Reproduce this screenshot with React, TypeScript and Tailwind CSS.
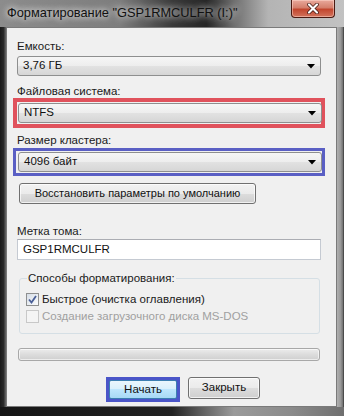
import React from "react";

const font = "font-['Liberation_Sans',Arial,sans-serif]";

function Arrow() {
  return (
    <svg width="8" height="5" viewBox="0 0 8 5" className="shrink-0">
      <path d="M0 0H8L4 4.5Z" fill="#000" />
    </svg>
  );
}

function Combo({ value }: { value: string }) {
  return (
    <div className="flex h-[20px] w-[304px] items-center justify-between rounded-[3px] border border-[#8e8f8f] bg-[linear-gradient(to_bottom,#f6f6f6_0%,#ededed_50%,#e2e2e2_50%,#d6d6d6_100%)] pl-[5px] pr-[5px] text-[11.5px] leading-none text-[#111]">
      <span>{value}</span>
      <Arrow />
    </div>
  );
}

function Label({ children, className = "" }: { children: React.ReactNode; className?: string }) {
  return <div className={`h-[14px] text-[11.5px] leading-[14px] text-[#1a1a1a] ${className}`}>{children}</div>;
}

function Checkbox({ checked, disabled }: { checked?: boolean; disabled?: boolean }) {
  return (
    <div
      className={`flex h-[13px] w-[13px] shrink-0 items-center justify-center border ${
        disabled ? "border-[#c8c8c8] bg-[#f4f4f4]" : "border-[#8e8f8f] bg-[linear-gradient(135deg,#d6dde6,#fbfcfd)]"
      }`}
    >
      {checked && (
        <svg width="9" height="9" viewBox="0 0 9 9">
          <path d="M1 4.5L3.5 7.5L8 1" fill="none" stroke="#4a5f97" strokeWidth="1.8" />
        </svg>
      )}
    </div>
  );
}

export default function App() {
  return (
    <div
      className={`flex h-[416px] w-[344px] flex-col overflow-hidden bg-[linear-gradient(to_right,#161616_0%,#1e1e1e_45%,#3a3a3a_55%,#8f8f8f_68%,#9a9a9a_85%,#8a8a8a_100%)] ${font}`}
    >
      {/* title bar */}
      <div className="flex h-[27px] shrink-0 items-start justify-between bg-[linear-gradient(to_right,#8c8c8c_0%,#7d7d7d_35%,#3a3a3a_50%,#262626_60%,#6f6f6f_68%,#b4b4b4_78%,#c2c2c2_100%)] pl-[7px] pr-[9px]">
        <div className="pt-[5px] text-[12.8px] leading-[16px] text-[#111] [text-shadow:0_0_6px_rgba(255,255,255,0.9),0_0_10px_rgba(255,255,255,0.6)]">
          Форматирование "GSP1RMCULFR (I:)"
        </div>
        <div className="flex h-[18px] w-[44px] items-center justify-center rounded-b-[4px] border border-t-0 border-[#4a1a12] bg-[linear-gradient(to_bottom,#e9a99c_0%,#d47f6c_45%,#c2462e_55%,#d2735c_100%)] shadow-[inset_0_0_0_1px_rgba(255,220,210,0.5)]">
          <svg width="12" height="11" viewBox="0 0 12 11">
            <path d="M2 1.5L10 9.5M10 1.5L2 9.5" stroke="#3a120c" strokeWidth="3.6" strokeLinecap="round" />
            <path d="M2 1.5L10 9.5M10 1.5L2 9.5" stroke="#fff" strokeWidth="2.2" strokeLinecap="round" />
          </svg>
        </div>
      </div>

      <div className="flex flex-1">
        <div className="w-[6px] shrink-0 bg-[linear-gradient(to_right,#1a1a1a_0%,#2a2a2a_60%,#6a6a6a_100%)]" />
        {/* panel */}
        <div className="flex h-[380px] w-[331px] shrink-0 flex-col border border-[#7a7a7a] bg-[#f0f0f0] pl-[10px] pt-[11px] text-[11.5px] text-[#1a1a1a]">
          <Label>Емкость:</Label>
          <div className="mt-[3px]">
            <Combo value="3,76 ГБ" />
          </div>

          <Label className="mt-[8px]">Файловая система:</Label>
          <div className="-ml-[4px] w-[312px] border-[4px] border-[#e0525c] p-[1px]">
            <Combo value="NTFS" />
          </div>

          <Label className="mt-[5px]">Размер кластера:</Label>
          <div className="-ml-[4px] mt-[1px] w-[312px] border-[3px] border-[#5a5fc4] p-[1px] pl-[2px]">
            <Combo value="4096 байт" />
          </div>

          <div className="ml-[2px] mt-[7px] flex h-[21px] w-[237px] items-center justify-center rounded-[3px] border border-[#707070] bg-[linear-gradient(to_bottom,#f2f2f2_0%,#ebebeb_50%,#dddddd_50%,#cfcfcf_100%)] text-[11px] text-[#111] shadow-[inset_0_0_0_1px_rgba(255,255,255,0.7)]">
            Восстановить параметры по умолчанию
          </div>

          <Label className="mt-[20px]">Метка тома:</Label>
          <div className="mt-[1px] flex h-[21px] w-[304px] items-center border border-[#c5cad2] border-t-[#abadb3] bg-white pl-[5px] text-[11.5px] text-[#111]">
            GSP1RMCULFR
          </div>

          <fieldset className="ml-[2px] mt-[11px] w-[301px] rounded-[3px] border border-[#d5dfe5] px-[6px] pb-[10px]">
            <legend className="ml-[1px] px-[1px] text-[11.5px] leading-[14px] text-[#1a1a1a]">Способы форматирования:</legend>
            <div className="mt-[7px] flex h-[14px] items-center gap-[3px]">
              <Checkbox checked />
              <span className="leading-[14px]">Быстрое (очистка оглавления)</span>
            </div>
            <div className="mt-[3px] flex h-[14px] items-center gap-[3px]">
              <Checkbox disabled />
              <span className="leading-[14px] text-[#a0a0a0]">Создание загрузочного диска MS-DOS</span>
            </div>
          </fieldset>

          <div className="ml-[1px] mt-[14px] h-[13px] w-[302px] rounded-[3px] border border-[#a8a8a8] bg-[linear-gradient(to_bottom,#ececec_0%,#dcdcdc_50%,#cfcfcf_100%)] shadow-[inset_0_0_0_1px_rgba(255,255,255,0.6)]" />

          <div className="ml-[89px] mt-[16px] flex items-start gap-[8px]">
            <div className="h-[25px] w-[74px] border-[3px] border-[#4a55c8] bg-[#4a55c8]">
              <div className="flex h-full w-full items-center justify-center rounded-[2px] border border-[#3c7fb1] bg-[linear-gradient(to_bottom,#eaf6fd_0%,#d9f0fc_50%,#bee6fd_50%,#a7d9f5_100%)] text-[11.5px] text-[#111]">
                Начать
              </div>
            </div>
            <div className="flex h-[22px] w-[72px] items-center justify-center rounded-[3px] border border-[#707070] bg-[linear-gradient(to_bottom,#f2f2f2_0%,#ebebeb_50%,#dddddd_50%,#cfcfcf_100%)] text-[11.5px] text-[#111] shadow-[inset_0_0_0_1px_rgba(255,255,255,0.7)]">
              Закрыть
            </div>
          </div>
        </div>
        <div className="w-[7px] shrink-0 bg-[linear-gradient(to_right,#b0b0b0_0%,#9a9a9a_50%,#777_80%,#333_100%)]" />
      </div>
      <div className="h-[9px] shrink-0 bg-[linear-gradient(to_right,#151515_0%,#222_50%,#5a5a5a_58%,#9a9a9a_68%,#8a8a8a_85%,#6f6f6f_100%)]" />
    </div>
  );
}
